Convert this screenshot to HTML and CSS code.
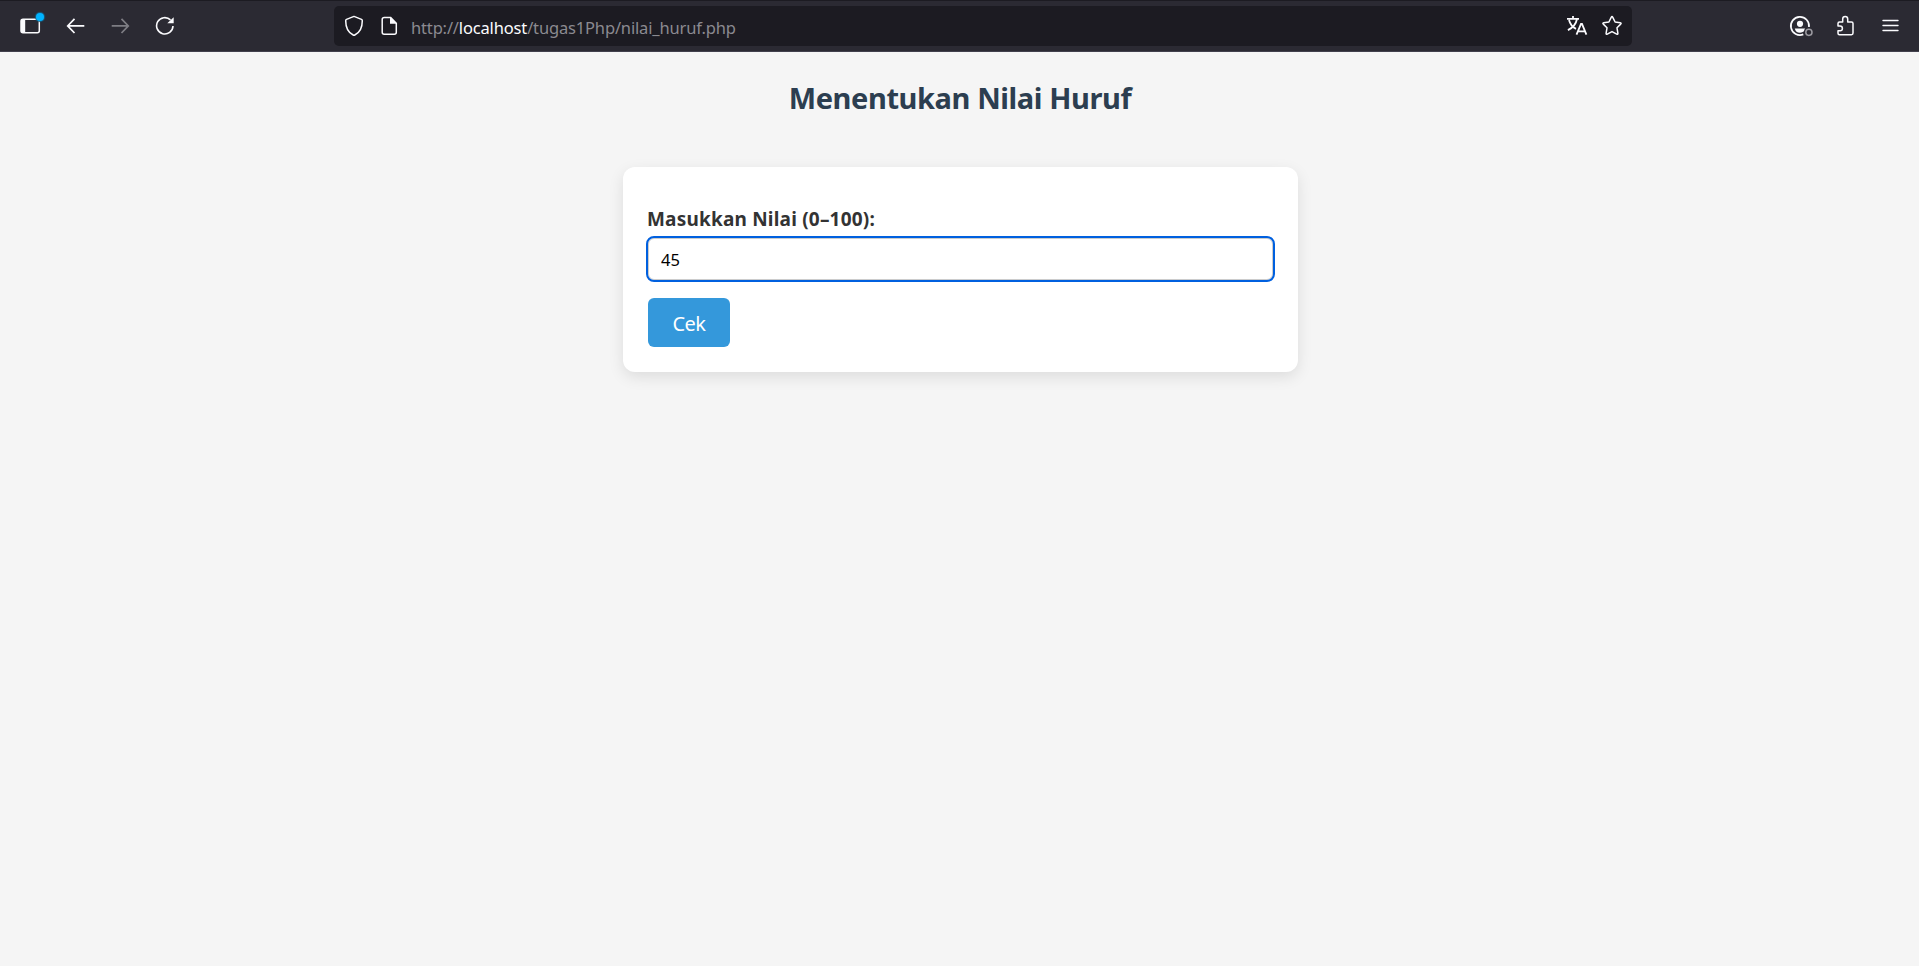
FILE: index.html
```html
<!DOCTYPE html>
<html lang="id">
<head>
<meta charset="utf-8">
<title>Menentukan Nilai Huruf</title>
<link rel="stylesheet" href="styles.css">
</head>
<body>
<header class="toolbar">
  <nav class="nav">
    <span class="icon sidebar-btn">
      <svg width="22" height="18" viewBox="0 0 22 18"><rect x="1" y="2.2" width="18.3" height="13.6" rx="2" fill="none" stroke="#fbfbfe" stroke-width="1.5"/><path d="M1 4Q1 2.400 2.500 2.400H5.200V15.700H2.500Q1 15.700 1 14Z" fill="#fbfbfe"/></svg>
      <i class="dot"></i>
    </span>
    <svg class="icon back" width="20" height="18" viewBox="0 0 20 18"><path d="M8.500 1.800 1.700 8.900 8.500 16M2 8.900H18.300" fill="none" stroke="#fbfbfe" stroke-width="1.7"/></svg>
    <svg class="icon forward" width="20" height="18" viewBox="0 0 20 18"><path d="M11.500 1.800 18.300 8.900 11.500 16M18 8.900H1.700" fill="none" stroke="#7e7d84" stroke-width="1.7"/></svg>
    <svg class="icon reload" width="20" height="20" viewBox="0 0 20 20"><path d="M15.500 3.900A8.200 8.200 0 1 0 18 10" fill="none" stroke="#fbfbfe" stroke-width="1.600"/><path d="M18.700 1.200V7.200H12.300Z" fill="#fbfbfe"/></svg>
  </nav>
  <div class="urlbar">
    <svg class="shield" width="20" height="22" viewBox="0 0 20 22"><path d="M10 1.400 17.500 4.400Q18.300 4.800 18.300 5.700C18.300 12.500 15.500 17.700 10.800 20Q10 20.400 9.200 20C4.500 17.700 1.700 12.500 1.700 5.700Q1.700 4.800 2.500 4.400Z" fill="none" stroke="#fbfbfe" stroke-width="1.500" stroke-linejoin="round"/></svg>
    <svg class="page" width="17" height="20" viewBox="0 0 17 20"><path d="M3.200 1.600H9.700L15.300 7.200V16.300Q15.300 18.300 13.300 18.300H3.200Q1.200 18.300 1.200 16.300V3.600Q1.200 1.600 3.200 1.600Z" fill="none" stroke="#fbfbfe" stroke-width="1.500"/><path d="M9 1V7.800H16Z" fill="#fbfbfe"/></svg>
    <span class="url">http://<b>localhost</b>/tugas1Php/nilai_huruf.php</span>
    <svg class="translate" width="22" height="22" viewBox="0 0 22 22"><g fill="none" stroke="#fbfbfe" stroke-width="1.800"><path d="M1 3.800H13M7 1V3.800M3 5C4.200 9.500 7 12.400 10 13.900M11 4C10 9 6.500 13 1.900 15.100"/><path d="M10.500 19.700 15 8.800H16L20.400 19.700M11.800 16.300H19.200"/></g></svg>
    <svg class="star" width="22" height="22" viewBox="0 0 22 22"><path d="M10.200 2.300Q11 .9 11.800 2.300L14.100 7 19.300 7.700Q20.700 8 19.700 9.100L16 12.800 16.900 18.300Q17 19.700 15.700 19.100L11 16.600 6.300 19.100Q5 19.700 5.100 18.300L6 12.800 2.300 9.100Q1.300 8 2.700 7.700L7.900 7Z" fill="none" stroke="#fbfbfe" stroke-width="1.500" stroke-linejoin="round"/></svg>
  </div>
  <div class="actions">
    <svg class="account" width="24" height="22" viewBox="0 0 24 22"><path d="M20 12A9.100 9.100 0 1 0 14.300 19.400" fill="none" stroke="#fbfbfe" stroke-width="1.700"/><circle cx="11" cy="8.800" r="3.100" fill="#fbfbfe"/><path d="M5.800 13.400H16.200Q15 14.500 15 16.300 13.300 17.700 11 17.700C8.200 17.700 6.200 16 5.800 13.400Z" fill="#fbfbfe"/><circle cx="19.900" cy="17.300" r="3.100" fill="none" stroke="#9b9aa1" stroke-width="1.500"/></svg>
    <svg class="puzzle" width="19" height="22" viewBox="0 0 19 22"><path d="M3.500 7.100H6.700V4A2.500 2.500 0 0 1 11.700 4V7.100H15.500Q17 7.100 17 8.600V18.100Q17 19.700 15.500 19.700H3.500Q2 19.700 2 18.200V15.700H4.100A2.300 2.300 0 0 0 4.100 11.100H2V8.600Q2 7.100 3.500 7.100Z" fill="none" stroke="#fbfbfe" stroke-width="1.500" stroke-linejoin="round"/></svg>
    <svg class="menu" width="17" height="15" viewBox="0 0 17 15"><path d="M1 2.500H16M1 7.500H16M1 12.500H16" stroke="#fbfbfe" stroke-width="1.400" stroke-linecap="round"/></svg>
  </div>
</header>
<main class="content">
  <h1 class="title">Menentukan Nilai Huruf</h1>
  <form class="card">
    <label class="label" for="nilai">Masukkan Nilai (0–100):</label>
    <input class="field" id="nilai" type="text" value="45">
    <button class="submit" type="button">Cek</button>
  </form>
</main>
</body>
</html>
```
FILE: styles.css
```css
* { box-sizing: border-box; }
body {
  margin: 0;
  min-height: 966px;
  background: #f5f5f5;
  color: #333;
  font-family: "Noto Sans", "Open Sans", sans-serif;
}
svg { display: block; flex: none; }
.toolbar {
  display: flex;
  align-items: flex-start;
  height: 52px;
  background: #2b2a33;
  border-top: 1px solid #1c1b22;
  border-bottom: 1px solid #42414d;
}
.nav { display: flex; width: 334px; padding-left: 20px; }
.sidebar-btn { position: relative; margin-top: 16px; width: 22px; height: 18px; }
.dot {
  position: absolute;
  left: 16px;
  top: -4px;
  width: 8px;
  height: 8px;
  border-radius: 50%;
  background: #00b3ff;
  box-shadow: 0 0 1px 1px #145f83;
}
.back { margin: 16px 0 0 24px; }
.forward { margin: 16px 0 0 24px; }
.reload { margin: 15px 0 0 25px; }
.urlbar {
  display: flex;
  width: 1298px;
  height: 40px;
  margin-top: 5px;
  padding-left: 10px;
  border-radius: 5px;
  background: #1c1b22;
}
.shield { margin-top: 9px; }
.page { margin: 10px 0 0 17px; }
.url {
  flex: 1;
  margin-left: 13px;
  line-height: 43px;
  font-size: 16.5px;
  letter-spacing: -0.16px;
  color: #8b8a90;
  white-space: nowrap;
}
.url b { font-weight: 400; color: #fbfbfe; }
.translate { margin-top: 9px; }
.star { margin: 9px 9px 0 13px; }
.actions { display: flex; padding-left: 157px; }
.account { margin-top: 14px; }
.puzzle { margin: 14px 0 0 23px; }
.menu { margin: 17px 0 0 27px; }
.title {
  margin: 0;
  height: 115px;
  padding: 22px 0 0 1px;
  text-align: center;
  font-size: 29px;
  line-height: 48px;
  letter-spacing: -0.4px;
  color: #2c3e50;
}
.card {
  display: flex;
  flex-direction: column;
  align-items: flex-start;
  width: 675px;
  height: 205px;
  margin: 0 0 0 623px;
  padding: 37px 25px 25px;
  border-radius: 12px;
  background: #fff;
  box-shadow: 0 5px 15px rgba(0, 0, 0, 0.1);
}
.label {
  height: 34px;
  margin-left: -1px;
  line-height: 31px;
  font-size: 19px;
  font-weight: 700;
  letter-spacing: 0.2px;
}
.field {
  width: 625px;
  height: 42px;
  padding: 0 12px;
  border: 1px solid #ccc;
  border-radius: 6px;
  outline: 2px solid #0060df;
  outline-offset: 0;
  background: #fff;
  color: #000;
  font: 16.5px "Noto Sans", sans-serif;
}
.submit {
  width: 82px;
  height: 49px;
  margin-top: 18px;
  padding: 1px 0 0;
  border: 0;
  border-radius: 6px;
  background: #3498db;
  color: #fff;
  font: 20px "Noto Sans", sans-serif;
  letter-spacing: -0.5px;
}
```
